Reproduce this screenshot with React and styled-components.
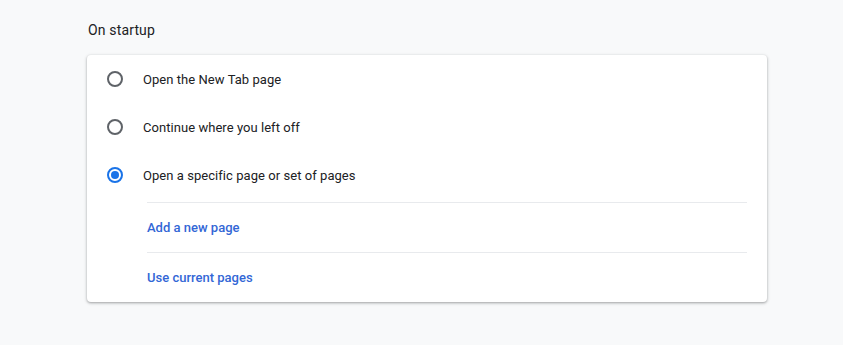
import React, { useState } from 'react';
import styled, { createGlobalStyle } from 'styled-components';

const GlobalStyle = createGlobalStyle`
  html, body {
    margin: 0;
    padding: 0;
    background: #f8f9fa;
    font-family: Roboto, "Liberation Sans", Arial, sans-serif;
  }
`;

const Page = styled.div`
  width: 843px;
  height: 345px;
  box-sizing: border-box;
  padding: 22px 0 0 87px;
  background: #f8f9fa;
`;

const SectionTitle = styled.h2`
  margin: 0 0 17px 1px;
  font-size: 14px;
  font-weight: 400;
  line-height: 16px;
  color: #202124;
  letter-spacing: 0.15px;
`;

const Card = styled.div`
  width: 680px;
  background: #fff;
  border-radius: 4px;
  box-shadow: 0 1px 2px rgba(60, 64, 67, 0.3), 0 1px 3px 1px rgba(60, 64, 67, 0.15);
`;

const RadioRow = styled.label`
  display: flex;
  align-items: center;
  height: 48px;
  padding-left: 20px;
  cursor: pointer;
`;

const RadioCircle = styled.span`
  width: 16px;
  height: 16px;
  box-sizing: border-box;
  border-radius: 50%;
  border: 2px solid ${(p) => (p.checked ? '#1a73e8' : '#5f6368')};
  display: flex;
  align-items: center;
  justify-content: center;
  flex-shrink: 0;

  &::after {
    content: '';
    width: 8px;
    height: 8px;
    border-radius: 50%;
    background: #1a73e8;
    display: ${(p) => (p.checked ? 'block' : 'none')};
  }
`;

const RadioLabel = styled.span`
  margin-left: 20px;
  font-size: 13px;
  color: #202124;
  letter-spacing: 0.05px;
`;

const LinkList = styled.div`
  margin: 3px 20px 0 60px;
`;

const LinkRow = styled.div`
  display: flex;
  align-items: center;
  height: 49px;
  border-top: 1px solid #e8eaed;
`;

const LinkButton = styled.button`
  border: none;
  background: none;
  padding: 0;
  font-family: inherit;
  font-size: 13px;
  font-weight: 500;
  color: #3367d6;
  cursor: pointer;
`;

const options = [
  'Open the New Tab page',
  'Continue where you left off',
  'Open a specific page or set of pages',
];

export default function App() {
  const [selected, setSelected] = useState(2);

  return (
    <Page>
      <GlobalStyle />
      <SectionTitle>On startup</SectionTitle>
      <Card>
        {options.map((label, i) => (
          <RadioRow key={label} onClick={() => setSelected(i)}>
            <RadioCircle checked={selected === i} />
            <RadioLabel>{label}</RadioLabel>
          </RadioRow>
        ))}
        {selected === 2 && (
          <LinkList>
            <LinkRow>
              <LinkButton>Add a new page</LinkButton>
            </LinkRow>
            <LinkRow>
              <LinkButton>Use current pages</LinkButton>
            </LinkRow>
          </LinkList>
        )}
      </Card>
    </Page>
  );
}
